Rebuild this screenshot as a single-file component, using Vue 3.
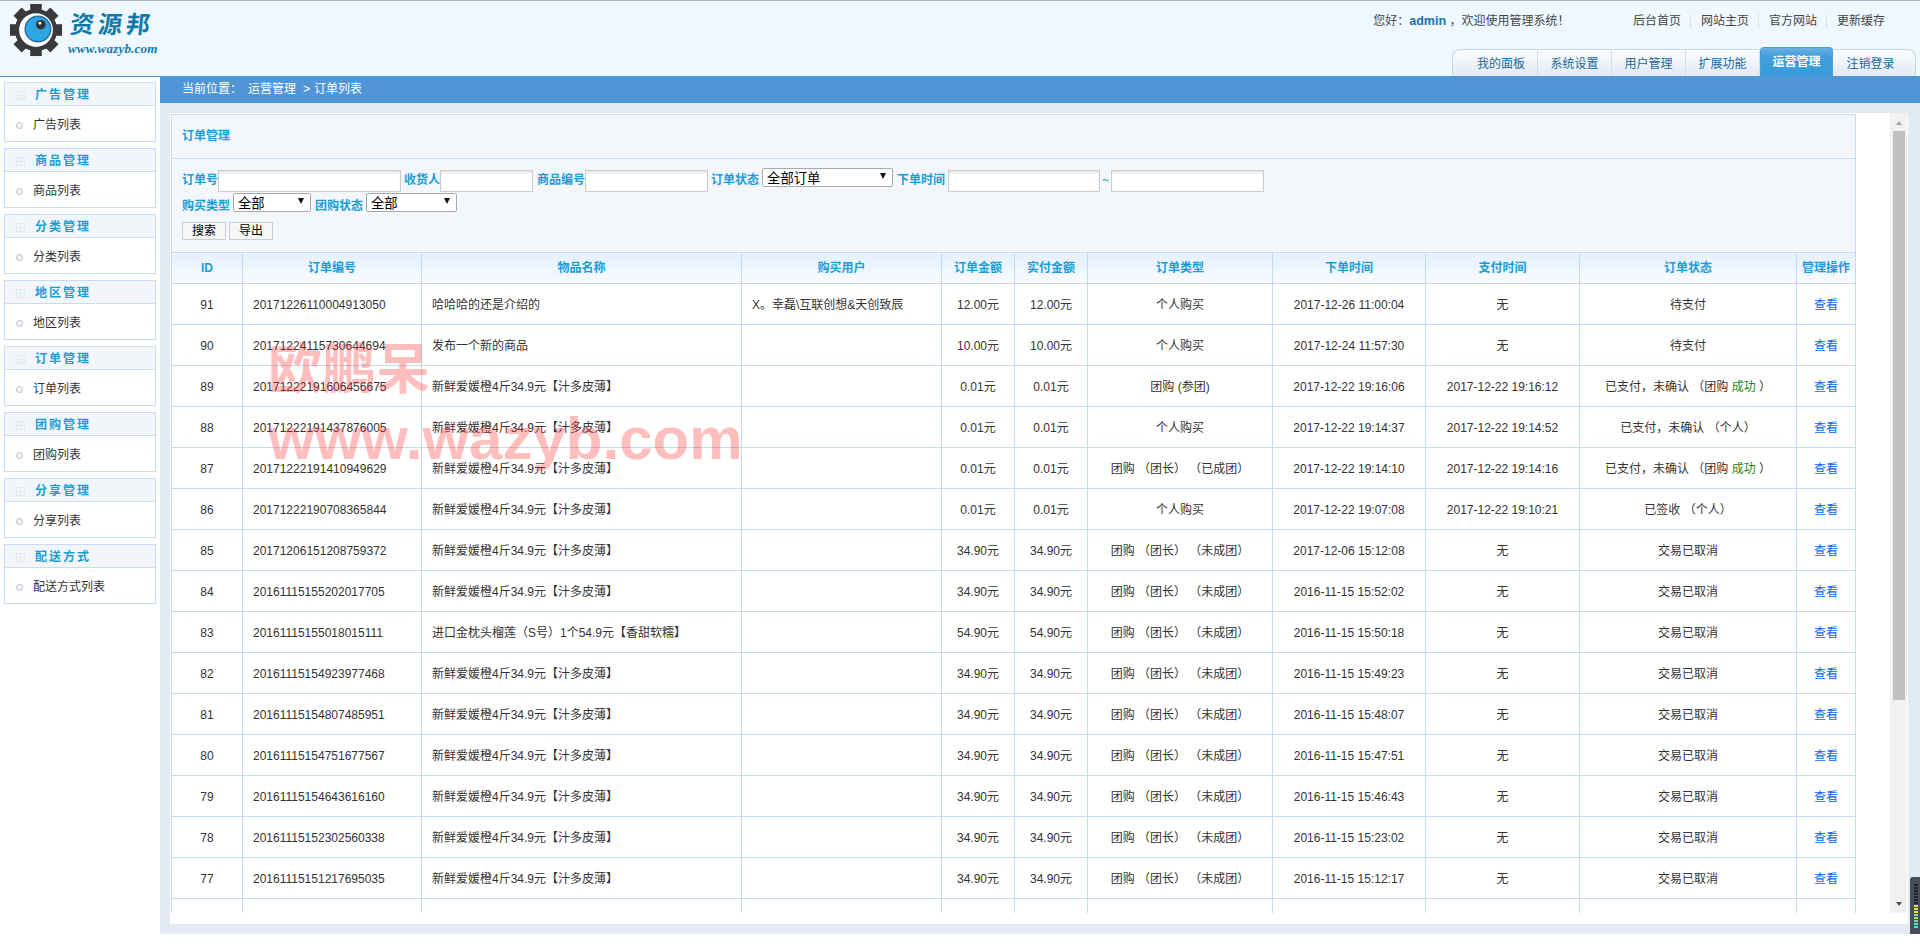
<script setup>
const sideGroups = [
  ['广告管理', '广告列表'], ['商品管理', '商品列表'], ['分类管理', '分类列表'], ['地区管理', '地区列表'],
  ['订单管理', '订单列表'], ['团购管理', '团购列表'], ['分享管理', '分享列表'], ['配送方式', '配送方式列表']
]
const tabs = ['我的面板', '系统设置', '用户管理', '扩展功能', '运营管理', '注销登录']
const links = ['后台首页', '网站主页', '官方网站', '更新缓存']
const heads = ['ID', '订单编号', '物品名称', '购买用户', '订单金额', '实付金额', '订单类型', '下单时间', '支付时间', '订单状态', '管理操作']
const colWidths = [71, 179, 320, 200, 73, 73, 185, 153, 154, 217, 59]

const orange = '新鲜爱媛橙4斤34.9元【汁多皮薄】'
const cancelled = '团购 （团长） （未成团）'
const rows = [
  { id: 91, no: '20171226110004913050', name: '哈哈哈的还是介绍的', user: 'X。幸磊\\互联创想&天创致辰', amt: '12.00元', type: '个人购买', at: '2017-12-26 11:00:04', paid: '无', status: '待支付' },
  { id: 90, no: '20171224115730644694', name: '发布一个新的商品', user: '', amt: '10.00元', type: '个人购买', at: '2017-12-24 11:57:30', paid: '无', status: '待支付' },
  { id: 89, no: '20171222191606456675', name: orange, user: '', amt: '0.01元', type: '团购 (参团)', at: '2017-12-22 19:16:06', paid: '2017-12-22 19:16:12', status: '已支付，未确认 （团购 ', ok: true },
  { id: 88, no: '20171222191437876005', name: orange, user: '', amt: '0.01元', type: '个人购买', at: '2017-12-22 19:14:37', paid: '2017-12-22 19:14:52', status: '已支付，未确认 （个人）' },
  { id: 87, no: '20171222191410949629', name: orange, user: '', amt: '0.01元', type: '团购 （团长） （已成团）', at: '2017-12-22 19:14:10', paid: '2017-12-22 19:14:16', status: '已支付，未确认 （团购 ', ok: true },
  { id: 86, no: '20171222190708365844', name: orange, user: '', amt: '0.01元', type: '个人购买', at: '2017-12-22 19:07:08', paid: '2017-12-22 19:10:21', status: '已签收 （个人）' },
  { id: 85, no: '20171206151208759372', name: orange, user: '', amt: '34.90元', type: cancelled, at: '2017-12-06 15:12:08', paid: '无', status: '交易已取消' },
  { id: 84, no: '20161115155202017705', name: orange, user: '', amt: '34.90元', type: cancelled, at: '2016-11-15 15:52:02', paid: '无', status: '交易已取消' },
  { id: 83, no: '20161115155018015111', name: '进口金枕头榴莲（S号）1个54.9元【香甜软糯】', user: '', amt: '54.90元', type: cancelled, at: '2016-11-15 15:50:18', paid: '无', status: '交易已取消' },
  { id: 82, no: '20161115154923977468', name: orange, user: '', amt: '34.90元', type: cancelled, at: '2016-11-15 15:49:23', paid: '无', status: '交易已取消' },
  { id: 81, no: '20161115154807485951', name: orange, user: '', amt: '34.90元', type: cancelled, at: '2016-11-15 15:48:07', paid: '无', status: '交易已取消' },
  { id: 80, no: '20161115154751677567', name: orange, user: '', amt: '34.90元', type: cancelled, at: '2016-11-15 15:47:51', paid: '无', status: '交易已取消' },
  { id: 79, no: '20161115154643616160', name: orange, user: '', amt: '34.90元', type: cancelled, at: '2016-11-15 15:46:43', paid: '无', status: '交易已取消' },
  { id: 78, no: '20161115152302560338', name: orange, user: '', amt: '34.90元', type: cancelled, at: '2016-11-15 15:23:02', paid: '无', status: '交易已取消' },
  { id: 77, no: '20161115151217695035', name: orange, user: '', amt: '34.90元', type: cancelled, at: '2016-11-15 15:12:17', paid: '无', status: '交易已取消' }
]
const ticks = Array.from({ length: 15 }, (_, i) => (i < 7 ? 'off' : i < 10 ? 'yellow' : i < 12 ? 'green' : 'teal'))
const teeth = [0, 45, 90, 135, 180, 225, 270, 315]
</script>

<template>
  <div class="page">
    <header class="top">
      <div class="logo">
        <svg class="gear" width="54" height="54" viewBox="0 0 56 56">
          <g fill="#3a3a3c">
            <rect v-for="a in teeth" :key="a" x="22" y="1" width="12" height="10" :transform="`rotate(${a} 28 28)`" />
            <circle cx="28" cy="28" r="22" />
          </g>
          <circle cx="28" cy="28" r="17.5" fill="#fff" />
          <circle cx="30" cy="27" r="14" fill="#1f6f9f" />
          <circle cx="30" cy="27" r="12.5" fill="#2ea6e3" />
          <circle cx="33" cy="22.5" r="5" fill="#333" />
          <circle cx="32" cy="21" r="1.5" fill="#fff" />
        </svg>
        <div class="brand">
          <div class="brand-cn">资源邦</div>
          <div class="brand-en">www.wazyb.com</div>
        </div>
      </div>
      <div class="top-right">
        <div class="top-info">
          <span class="welcome">您好：<b>admin</b> ，欢迎使用管理系统！</span>
          <span class="links">
            <span v-for="l in links" :key="l" class="link">{{ l }}</span>
          </span>
        </div>
        <nav class="tabs">
          <span v-for="t in tabs" :key="t" class="tab" :class="{ active: t === '运营管理', first: t === '我的面板' }">{{ t }}</span>
        </nav>
      </div>
    </header>

    <div class="body">
      <aside class="side">
        <section v-for="g in sideGroups" :key="g[0]" class="side-box">
          <h3 class="side-title"><i class="plus"></i>{{ g[0] }}</h3>
          <div class="side-item"><i class="dot"></i>{{ g[1] }}</div>
        </section>
      </aside>

      <main class="main">
        <div class="crumb">
          <span class="crumb-label">当前位置：</span>
          <span>运营管理</span>
          <span class="crumb-sep">&gt;</span>
          <span>订单列表</span>
        </div>
        <div class="canvas">
          <div class="frame">
            <div class="content">
              <div class="panel">
                <div class="panel-title">订单管理</div>
                <div class="filters">
                  <div class="row row-one">
                    <label>订单号</label><input class="w183" />
                    <label class="ml3">收货人</label><input class="w93" />
                    <label class="ml4">商品编号</label><input class="w123" />
                    <label class="ml3">订单状态</label>
                    <span class="sel w131"><select><option>全部订单</option></select></span>
                    <label class="ml4">下单时间</label><input class="w152 ml3" />
                    <span class="tilde">~</span><input class="w153" />
                  </div>
                  <div class="row row-two">
                    <label>购买类型</label>
                    <span class="sel w78 ml3"><select><option>全部</option></select></span>
                    <label class="ml4">团购状态</label>
                    <span class="sel w91 ml3"><select><option>全部</option></select></span>
                  </div>
                  <div class="btns">
                    <button type="button">搜索</button>
                    <button type="button">导出</button>
                  </div>
                </div>
                <table class="grid">
                  <colgroup>
                    <col v-for="(w, i) in colWidths" :key="i" :style="{ width: w + 'px' }" />
                  </colgroup>
                  <thead>
                    <tr><th v-for="h in heads" :key="h">{{ h }}</th></tr>
                  </thead>
                  <tbody>
                    <tr v-for="r in rows" :key="r.id">
                      <td>{{ r.id }}</td>
                      <td class="left">{{ r.no }}</td>
                      <td class="left">{{ r.name }}</td>
                      <td class="left">{{ r.user }}</td>
                      <td>{{ r.amt }}</td>
                      <td>{{ r.amt }}</td>
                      <td>{{ r.type }}</td>
                      <td>{{ r.at }}</td>
                      <td>{{ r.paid }}</td>
                      <td>{{ r.status }}<template v-if="r.ok"><span class="ok">成功</span> ）</template></td>
                      <td><span class="view">查看</span></td>
                    </tr>
                    <tr class="peek">
                      <td></td><td></td><td class="left">{{ orange }}</td><td></td><td></td><td></td><td></td><td></td><td></td><td></td><td></td>
                    </tr>
                  </tbody>
                </table>
              </div>
            </div>
            <div class="scrollbar">
              <i class="arrow up"></i>
              <div class="thumb"></div>
              <i class="arrow down"></i>
            </div>
          </div>
        </div>
      </main>
    </div>

    <div class="watermark">
      <div class="wm-cn">欧鹏呆</div>
      <div class="wm-en">www.wazyb.com</div>
    </div>

    <div class="meter">
      <i v-for="(t, i) in ticks" :key="i" :class="t"></i>
    </div>
  </div>
</template>

<style scoped>
.page {
  position: relative;
  height: 934px;
  display: flex;
  flex-direction: column;
  font: 12px/1.2 "Liberation Sans", "Noto Sans CJK SC", sans-serif;
  color: #333;
  background: #fff;
  overflow: hidden;
}

/* header */
.top {
  height: 75px;
  flex: none;
  border-top: 1px solid #b4b4b4;
  background: #f0f8ff;
  display: flex;
  justify-content: space-between;
}
.logo { display: flex; padding: 2px 0 0 9px; }
.gear { flex: none; }
.brand { margin-left: 5px; color: #0f7aa9; }
.brand-cn {
  font-size: 24px;
  line-height: 28px;
  margin-top: 8px;
  padding-left: 2px;
  letter-spacing: 4px;
  font-weight: 700;
  transform: skewX(-6deg);
}
.brand-en {
  font: italic 700 13px/14px "Liberation Serif", serif;
  margin-top: 3px;
  letter-spacing: 0.2px;
}
.top-right { display: flex; flex-direction: column; align-items: flex-end; justify-content: space-between; }
.top-info { display: flex; padding: 13px 35px 0 0; line-height: 14px; }
.welcome { color: #444; }
.welcome b { color: #1273ac; font-size: 12.5px; }
.links { display: flex; margin-left: 54px; }
.link { padding: 0 9.5px; border-right: 1px solid #d5e2ee; color: #444; }
.link:last-child { border-right: 0; padding-right: 0; }
.tabs {
  display: flex;
  align-items: flex-end;
  margin-right: 4px;
  height: 29px;
}
.tab {
  width: 74px;
  height: 27px;
  box-sizing: border-box;
  line-height: 28px;
  text-align: center;
  color: #20689a;
  background: linear-gradient(#fbfdff, #e2e9f2);
  border-top: 1px solid #c5dbe8;
  border-right: 1px solid #d2dfea;
}
.tab.first {
  width: 86px;
  padding-left: 12px;
  border-left: 1px solid #c5dbe8;
  border-top-left-radius: 8px;
}
.tab.active {
  height: 29px;
  width: 73px;
  line-height: 29px;
  font-weight: 700;
  color: #fff;
  border: 1px solid #4a9fd6;
  border-bottom: 0;
  border-radius: 4px 4px 0 0;
  background: linear-gradient(#6ab1e2 0, #3f9edb 30%, #389bd9);
}
.tab:last-child {
  width: 83px;
  padding-right: 7px;
  border-right: 1px solid #c5dbe8;
  border-top-right-radius: 8px;
}

/* body */
.body { flex: 1; display: flex; min-height: 0; border-top: 0; }
.side {
  width: 160px;
  flex: none;
  box-sizing: border-box;
  border-top: 1px solid #4f97d6;
  padding: 5px 4px 0;
  display: flex;
  flex-direction: column;
  gap: 6px;
}
.side-box { height: 60px; box-sizing: border-box; border: 1px solid #c5dcf3; }
.side-title {
  margin: 0;
  height: 23px;
  box-sizing: border-box;
  padding: 3px 0 0 11px;
  background: #f2f6fb;
  border-bottom: 1px solid #c5dcf3;
  font-size: 12px;
  letter-spacing: 2px;
  color: #1b9cd6;
  display: flex;
  align-items: center;
}
.plus {
  width: 9px;
  height: 9px;
  margin-right: 10px;
  border: 1px solid #e4eaf1;
  box-sizing: border-box;
  background:
    linear-gradient(#e4eaf1, #e4eaf1) center / 100% 1px no-repeat,
    linear-gradient(#e4eaf1, #e4eaf1) center / 1px 100% no-repeat;
}
.side-item {
  height: 35px;
  box-sizing: border-box;
  padding: 4px 0 0 11px;
  display: flex;
  align-items: center;
  color: #333;
}
.dot {
  width: 7px;
  height: 7px;
  margin-right: 10px;
  box-sizing: border-box;
  border: 1px solid #b9c0c6;
  border-radius: 50%;
  background: #f4f6f8;
}

/* main */
.main { flex: 1; min-width: 0; display: flex; flex-direction: column; background: #e4eaf3; }
.crumb {
  height: 27px;
  flex: none;
  box-sizing: border-box;
  padding-left: 22px;
  background: #5095d5;
  color: #fff;
  line-height: 27px;
  display: flex;
}
.crumb-label { width: 66px; }
.crumb-sep { margin: 0 4px 0 7px; }
.canvas { flex: 1; padding: 10px 12px 10px 10px; min-height: 0; display: flex; }
.frame { flex: 1; display: flex; align-items: flex-start; background: #fff; min-width: 0; }
.content { width: 1720px; height: 800px; overflow: hidden; box-sizing: border-box; padding: 1px 0 0 1px; flex: none; }
.panel { width: 1685px; background: #f3f6fb; }
.panel-title {
  height: 45px;
  box-sizing: border-box;
  line-height: 42px;
  padding-left: 10px;
  border: 1px solid #c5dcf3;
  font-weight: 700;
  color: #1b9cd6;
}
.filters {
  height: 93px;
  box-sizing: border-box;
  padding: 9px 0 0 10px;
  border-left: 1px solid #c5dcf3;
  border-right: 1px solid #c5dcf3;
}
.row { display: flex; align-items: flex-start; }
.row-one { height: 25px; }
.row-two { height: 19px; }
.row label { font-weight: 700; color: #1b9cd6; line-height: 14px; margin-top: 5px; flex: none; }
.row-two label { margin-top: 6px; }
.row-one input { margin-top: 2px; }
input {
  height: 22px;
  box-sizing: border-box;
  padding: 0;
  margin: 0;
  border: 1px solid #ccc;
  background: #fff;
  box-shadow: inset 0 2px 2px #e8e8e8;
  outline: 0;
  flex: none;
}
.w183 { width: 183px; }
.w93 { width: 93px; }
.w123 { width: 123px; }
.w131 { width: 131px; margin-left: 3px; }
.w152 { width: 152px; }
.w153 { width: 153px; }
.w78 { width: 78px; }
.w91 { width: 91px; }
.ml3 { margin-left: 3px; }
.ml4 { margin-left: 4px; }
.tilde { width: 11px; color: #1b9cd6; line-height: 14px; margin-top: 5px; text-align: center; flex: none; }
.sel { position: relative; display: block; height: 19px; flex: none; }
.sel select {
  width: 100%;
  height: 19px;
  box-sizing: border-box;
  margin: 0;
  padding: 2px 0 0 4px;
  appearance: none;
  border: 1px solid #a9a9a9;
  border-radius: 2px;
  background: #fff;
  color: #000;
  font: 13.33px "Liberation Sans", "Noto Sans CJK SC", sans-serif;
  outline: 0;
}
.sel::after {
  content: "";
  position: absolute;
  right: 7px;
  top: 5px;
  border-style: solid;
  border-width: 6px 3.5px 0;
  border-color: #111 transparent transparent;
}
.btns { display: flex; gap: 3px; margin-top: 10px; }
.btns button {
  width: 44px;
  height: 18px;
  box-sizing: border-box;
  padding: 0;
  border: 1px solid #ccc;
  background: #f4f6f8;
  color: #000;
  font: 12px/16px "Liberation Sans", "Noto Sans CJK SC", sans-serif;
}
.grid { width: 1685px; border-collapse: collapse; table-layout: fixed; background: #fff; }
.grid th, .grid td { border: 1px solid #c5daf0; padding: 0; text-align: center; }
.grid th {
  height: 30px;
  font-weight: 700;
  color: #1b9cd6;
  background: linear-gradient(#e3f0fd, #f8fbff);
  white-space: nowrap;
}
.grid td { height: 38px; padding-top: 2px; white-space: nowrap; color: #333; }
.grid td.left { text-align: left; padding-left: 10px; }
.grid .peek td { height: 34px; padding-top: 6px; }
.ok { color: #16881a; }
.view { color: #0a66f5; }
.scrollbar {
  width: 17px;
  height: 800px;
  flex: none;
  background: #f1f1f1;
  display: flex;
  flex-direction: column;
  align-items: center;
  padding-top: 8px;
  box-sizing: border-box;
}
.thumb { width: 12px; height: 569px; background: #c1c1c1; margin-top: 6px; }
.arrow { width: 0; height: 0; border-style: solid; border-color: transparent; }
.arrow.up { border-width: 0 3.5px 4px; border-bottom-color: #a3a3a3; }
.arrow.down { border-width: 4px 3.5px 0; border-top-color: #505050; margin-top: auto; margin-bottom: 7px; }

/* overlays */
.watermark {
  position: absolute;
  left: 268px;
  top: 340px;
  pointer-events: none;
  color: rgba(255, 40, 40, 0.3);
  font-weight: 700;
}
.wm-cn { font-size: 54px; line-height: 60px; height: 69px; }
.wm-en { font-size: 60px; line-height: 60px; white-space: nowrap; }
.meter {
  position: absolute;
  right: 0;
  top: 877px;
  width: 10px;
  height: 59px;
  box-sizing: border-box;
  padding: 7px 2px 0 4px;
  background: #474d5c;
  border-radius: 3px 0 0 3px;
  display: flex;
  flex-direction: column;
  gap: 1px;
}
.meter i { height: 2px; flex: none; }
.meter .off { background: #23262e; }
.meter .yellow { background: #dfe04a; }
.meter .green { background: #9fe28a; }
.meter .teal { background: #5fe0b4; }
</style>

<style>
html, body { margin: 0; background: #fff; overflow: hidden; }
</style>
